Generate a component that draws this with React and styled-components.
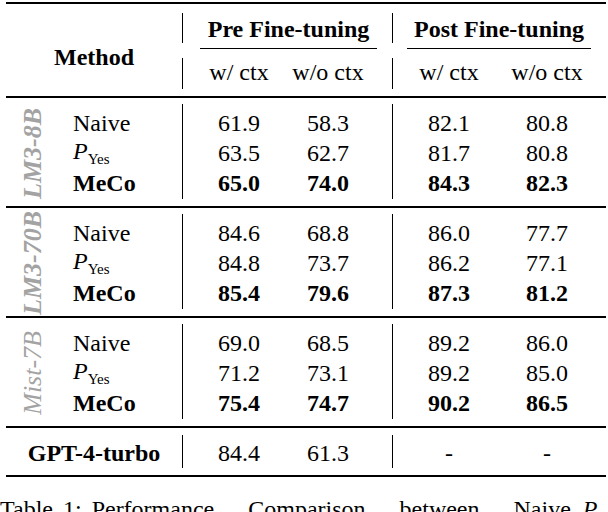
import React from "react";
import styled, { createGlobalStyle } from "styled-components";

const SERIF = `"Liberation Serif", "DejaVu Serif", serif`;

const GlobalStyle = createGlobalStyle`
  body {
    margin: 0;
    background: #fff;
    color: #000;
    font-family: ${SERIF};
  }
`;

const COLS = "40px 136px 1px 112px 66px 31px 1px 112px 84px 17px";

const Page = styled.div`
  width: 608px;
  height: 512px;
  box-sizing: border-box;
  padding: 2px 2px 0 6px;
  overflow: hidden;
  font-family: ${SERIF};
`;

const Table = styled.div`
  width: 600px;
  border-top: 2px solid #000;
  border-bottom: 2px solid #000;
  font-size: 24px;
`;

const Header = styled.div`
  display: grid;
  grid-template-columns: ${COLS};
  grid-template-rows: 45px 47px;
  border-bottom: 2px solid #000;
`;

const Section = styled.div`
  display: grid;
  grid-template-columns: ${COLS};
  grid-template-rows: repeat(${(p) => p.$rows}, 30px);
  padding: 10px 0 ${(p) => (p.$last ? 7 : 8)}px;
  border-bottom: ${(p) => (p.$last ? "none" : "2px solid #000")};
`;

const Bar = styled.div`
  grid-column: ${(p) => p.$col};
  grid-row: ${(p) => p.$row || "1 / -1"};
  background: #000;
  margin: ${(p) => p.$margin || "-4px 0 -1px"};
`;

const MethodHead = styled.div`
  grid-column: 1 / 3;
  grid-row: 1 / 3;
  display: flex;
  justify-content: center;
  align-items: center;
  padding-top: 14px;
  font-weight: 700;
`;

const GroupTitle = styled.div`
  grid-column: ${(p) => p.$span};
  grid-row: 1;
  display: flex;
  justify-content: center;
  align-items: center;
  padding-top: 6px;
  margin: 0 ${(p) => p.$right}px 0 ${(p) => p.$left}px;
  border-bottom: 1px solid #000;
  font-weight: 700;
  white-space: nowrap;
`;

const SubHead = styled.div`
  grid-column: ${(p) => p.$col};
  grid-row: 2;
  display: flex;
  justify-content: center;
  align-items: center;
  white-space: nowrap;
`;

const LabelCell = styled.div`
  grid-column: 1;
  grid-row: 1 / -1;
  display: flex;
  justify-content: center;
  align-items: center;
  padding-left: 14px;
`;

const LabelText = styled.span`
  writing-mode: vertical-rl;
  transform: rotate(180deg);
  white-space: nowrap;
  line-height: 1;
  font-size: 26px;
  font-style: italic;
  font-weight: ${(p) => (p.$light ? 400 : 700)};
  color: #a3a3a3;
`;

const MethodCell = styled.div`
  grid-column: 2;
  display: flex;
  align-items: center;
  padding-left: 27px;
  font-weight: ${(p) => (p.$bold ? 700 : 400)};
  white-space: nowrap;
`;

const ModelName = styled.div`
  grid-column: 1 / 3;
  display: flex;
  justify-content: center;
  align-items: center;
  font-weight: 700;
`;

const Cell = styled.div`
  grid-column: ${(p) => p.$col};
  display: flex;
  justify-content: center;
  align-items: center;
  font-weight: ${(p) => (p.$bold ? 700 : 400)};
`;

const Math = styled.span`
  white-space: nowrap;
`;

const Sub = styled.span`
  font-size: 15px;
  font-style: normal;
  vertical-align: -5px;
`;

const Caption = styled.p`
  margin: 19px 0 0 -6px;
  font-size: 24px;
  white-space: nowrap;
`;

const Words = styled.span`
  word-spacing: ${(p) => p.$gap}px;
`;

const DATA_COLS = [4, 5, 8, 9];

const PYes = () => (
  <Math>
    <i>P</i>
    <Sub>Yes</Sub>
  </Math>
);

const groups = [
  {
    label: "LM3-8B",
    rows: [
      ["Naive", ["61.9", "58.3", "82.1", "80.8"]],
      ["pyes", ["63.5", "62.7", "81.7", "80.8"]],
      ["MeCo", ["65.0", "74.0", "84.3", "82.3"]],
    ],
  },
  {
    label: "LM3-70B",
    rows: [
      ["Naive", ["84.6", "68.8", "86.0", "77.7"]],
      ["pyes", ["84.8", "73.7", "86.2", "77.1"]],
      ["MeCo", ["85.4", "79.6", "87.3", "81.2"]],
    ],
  },
  {
    label: "Mist-7B",
    light: true,
    rows: [
      ["Naive", ["69.0", "68.5", "89.2", "86.0"]],
      ["pyes", ["71.2", "73.1", "89.2", "85.0"]],
      ["MeCo", ["75.4", "74.7", "90.2", "86.5"]],
    ],
  },
];

export default function App() {
  return (
    <Page>
      <GlobalStyle />
      <Table>
        <Header>
          <MethodHead>Method</MethodHead>
          <Bar $col={3} $row={1} $margin="9px 0 6px" />
          <GroupTitle $span="4 / 7" $left={17} $right={15}>
            Pre Fine-tuning
          </GroupTitle>
          <Bar $col={7} $row={1} $margin="9px 0 6px" />
          <GroupTitle $span="8 / 11" $left={14} $right={15}>
            Post Fine-tuning
          </GroupTitle>
          <Bar $col={3} $row={2} $margin="9px 0 7px" />
          <SubHead $col={4}>w/ ctx</SubHead>
          <SubHead $col={5}>w/o ctx</SubHead>
          <Bar $col={7} $row={2} $margin="9px 0 7px" />
          <SubHead $col={8}>w/ ctx</SubHead>
          <SubHead $col={9}>w/o ctx</SubHead>
        </Header>

        {groups.map((g) => (
          <Section key={g.label} $rows={3}>
            <LabelCell>
              <LabelText $light={g.light}>{g.label}</LabelText>
            </LabelCell>
            <Bar $col={3} />
            <Bar $col={7} />
            {g.rows.map(([name, vals], r) => (
              <React.Fragment key={name}>
                <MethodCell $bold={name === "MeCo"} style={{ gridRow: r + 1 }}>
                  {name === "pyes" ? <PYes /> : name}
                </MethodCell>
                {vals.map((v, i) => (
                  <Cell
                    key={i}
                    $col={DATA_COLS[i]}
                    $bold={name === "MeCo"}
                    style={{ gridRow: r + 1 }}
                  >
                    {v}
                  </Cell>
                ))}
              </React.Fragment>
            ))}
          </Section>
        ))}

        <Section $last $rows={1}>
          <ModelName>GPT-4-turbo</ModelName>
          <Bar $col={3} $margin="-3px 0 0" />
          <Cell $col={4}>84.4</Cell>
          <Cell $col={5}>61.3</Cell>
          <Bar $col={7} $margin="-3px 0 0" />
          <Cell $col={8}>-</Cell>
          <Cell $col={9}>-</Cell>
        </Section>
      </Table>
      <Caption>
        <Words $gap={4}>Table 1: Performance</Words>
        <Words $gap={28}> Comparison between Naive</Words>
        <Words $gap={6}> </Words>
        <PYes />
      </Caption>
    </Page>
  );
}
